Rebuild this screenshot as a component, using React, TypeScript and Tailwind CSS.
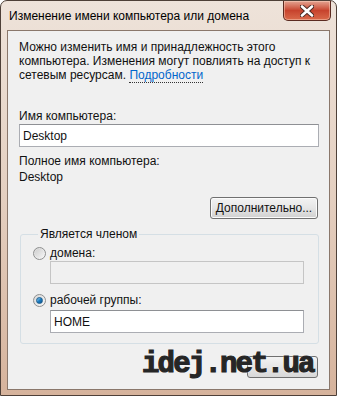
import React from 'react'

const font = { fontFamily: '"Liberation Sans", Arial, sans-serif' }

function Radio({ checked }: { checked?: boolean }) {
    return (
        <span className="w-[13px] h-[13px] rounded-full border border-[#8e8f8f] bg-gradient-to-br from-[#d8d8d8] to-[#f8f8f8] flex items-center justify-center shrink-0">
            {checked ? (
                <span className="w-[7px] h-[7px] rounded-full bg-gradient-to-br from-[#8fd3f5] via-[#1c7fc4] to-[#0d4f8a] border border-[#1b5c8c]" />
            ) : (
                <span className="w-[9px] h-[9px] rounded-full bg-gradient-to-br from-[#cfcfcf] to-[#f4f4f4]" />
            )}
        </span>
    )
}

function CloseButton() {
    return (
        <div className="absolute top-0 right-[5px] w-[48px] h-[20px] rounded-b-[5px] border border-t-0 border-[#5b2a20] bg-gradient-to-b from-[#e3a392] via-[#c7432d] to-[#d9694a] flex items-center justify-center shadow-[inset_0_0_0_1px_rgba(255,220,200,0.45)]">
            <svg width="14" height="12" viewBox="0 0 14 12">
                <path d="M2 1.5 L12 10.5 M12 1.5 L2 10.5" stroke="#4a2a24" strokeWidth="4.5" strokeLinecap="round" />
                <path d="M2 1.5 L12 10.5 M12 1.5 L2 10.5" stroke="#ffffff" strokeWidth="2.6" strokeLinecap="round" />
            </svg>
        </div>
    )
}

export default function App() {
    return (
        <div className="w-[337px] h-[397px] bg-white" style={font}>
            <div className="relative w-[337px] h-[396px] rounded-t-[7px] border border-[#4e4038] bg-gradient-to-b from-[#eee3da] via-[#e4cfc0] to-[#d6b39c] flex flex-col">
                {/* title */}
                <div className="h-[29px] flex items-center pl-[8px] text-[12px] text-black pt-[1px]">
                    Изменение имени компьютера или домена
                </div>
                <CloseButton />

                {/* client area */}
                <div className="ml-[6px] w-[323px] h-[360px] border border-[#8a776b] bg-[#f0f0f0] flex flex-col pl-[11px] pt-[9px] text-[12px] leading-[14px] text-[#111]">
                    <p>
                        Можно изменить имя и принадлежность этого компьютера. Изменения могут повлиять на доступ к сетевым ресурсам.{' '}
                        <span className="text-[#0066cc] border-b border-dotted border-[#333]">Подробности</span>
                    </p>

                    <p className="mt-[27px]">Имя компьютера:</p>
                    <div className="mt-[1px] w-[300px] h-[23px] border border-[#abadb3] border-t-[#8e9094] bg-white flex items-center px-[3px]">
                        Desktop
                    </div>

                    <p className="mt-[7px]">Полное имя компьютера:</p>
                    <p className="mt-[2px]">Desktop</p>

                    <div className="mt-[13px] ml-[191px] w-[108px] h-[22px] rounded-[3px] border border-[#707070] bg-gradient-to-b from-[#f3f3f3] via-[#e6e6e6] to-[#d0d0d0] flex items-center justify-center shadow-[inset_0_0_0_1px_#fbfbfb]">
                        Дополнительно...
                    </div>

                    <fieldset className="mt-[8px] ml-[1px] w-[299px] border border-[#d5dfe5] rounded-[3px] pl-[12px] pb-[10px]">
                        <legend className="ml-[5px] px-[2px]">Является членом</legend>
                        <div className="mt-[5px] flex items-center gap-[4px] h-[14px]">
                            <Radio />
                            <span>домена:</span>
                        </div>
                        <div className="mt-[1px] ml-[17px] w-[254px] h-[23px] border border-[#c5c5c5] bg-[#f0f0f0]" />
                        <div className="mt-[9px] flex items-center gap-[4px] h-[14px]">
                            <Radio checked />
                            <span>рабочей группы:</span>
                        </div>
                        <div className="mt-[3px] ml-[17px] w-[254px] h-[23px] border border-[#abadb3] border-t-[#8e9094] bg-white flex items-center px-[3px]">
                            HOME
                        </div>
                    </fieldset>

                    <div className="mt-[12px] ml-[228px] w-[71px] h-[22px] rounded-[3px] border border-[#707070] bg-gradient-to-b from-[#f3f3f3] to-[#d8d8d8]" />
                </div>

                {/* watermark */}
                <div
                    className="absolute left-[141px] top-[347px] text-[29px] leading-[34px] font-bold tracking-[-1.8px] text-[#262626] [-webkit-text-stroke:1.2px_#262626] [text-shadow:0_0_2px_#fff,0_0_2px_#fff]"
                    style={{ fontFamily: '"Liberation Mono", "Courier New", monospace' }}
                >
                    idej.net.ua
                </div>
            </div>
        </div>
    )
}
